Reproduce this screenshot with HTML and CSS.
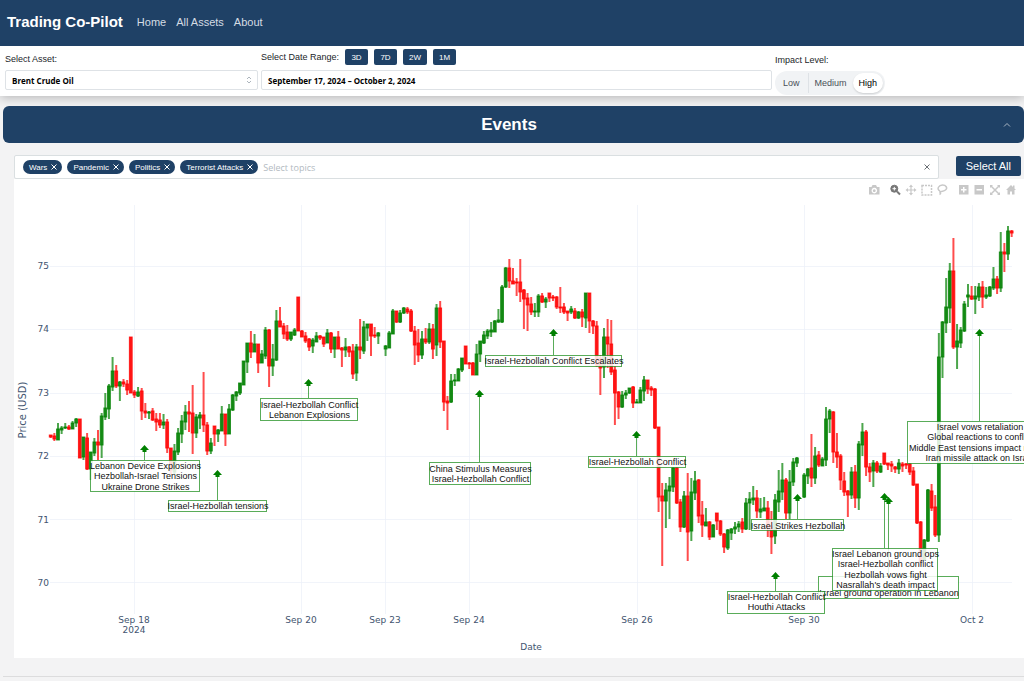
FILE: index.html
```html
<!DOCTYPE html>
<html lang="en">
<head>
<meta charset="utf-8">
<title>Trading Co-Pilot</title>
<link rel="stylesheet" href="styles.css">
</head>
<body>
<header class="topbar">
  <a class="brand" href="#">Trading Co-Pilot</a>
  <nav class="nav">
    <a href="#">Home</a>
    <a href="#">All Assets</a>
    <a href="#">About</a>
  </nav>
</header>

<section class="filters">
  <div class="field">
    <label class="field-label" for="asset">Select Asset:</label>
    <div class="select-wrap">
      <select id="asset" class="control"><option>Brent Crude Oil</option></select>
      <svg class="select-icon" viewBox="0 0 6 8" aria-hidden="true"><path d="M1 3l2-2 2 2M1 5l2 2 2-2"/></svg>
    </div>
  </div>
  <div class="field">
    <div class="range-head">
      <span class="field-label" id="range-label">Select Date Range:</span>
      <button class="preset" type="button">3D</button>
      <button class="preset" type="button">7D</button>
      <button class="preset" type="button">2W</button>
      <button class="preset" type="button">1M</button>
    </div>
    <button class="control" type="button" aria-describedby="range-label">September 17, 2024 – October 2, 2024</button>
  </div>
  <div class="field">
    <span class="field-label" id="impact-label">Impact Level:</span>
    <div class="segmented" role="radiogroup" aria-labelledby="impact-label">
      <input type="radio" name="impact" id="low"><label for="low">Low</label>
      <input type="radio" name="impact" id="medium"><label class="divided" for="medium">Medium</label>
      <input type="radio" name="impact" id="high" checked><label for="high">High</label>
    </div>
  </div>
</section>

<main class="content">
  <button class="accordion" type="button" aria-expanded="true">
    <span class="accordion-title">Events</span>
    <svg class="chevron" viewBox="0 0 8 6" aria-hidden="true"><path d="M1 4.500l3-3 3 3"/></svg>
  </button>

  <div class="panel">
    <div class="topic-row">
      <div class="topics">
        <span class="tag">Wars<button type="button" aria-label="Remove Wars"><svg viewBox="0 0 6 6"><path d="M.5.5l5 5M5.500.5l-5 5"/></svg></button></span>
        <span class="tag">Pandemic<button type="button" aria-label="Remove Pandemic"><svg viewBox="0 0 6 6"><path d="M.5.5l5 5M5.500.5l-5 5"/></svg></button></span>
        <span class="tag">Politics<button type="button" aria-label="Remove Politics"><svg viewBox="0 0 6 6"><path d="M.5.5l5 5M5.500.5l-5 5"/></svg></button></span>
        <span class="tag">Terrorist Attacks<button type="button" aria-label="Remove Terrorist Attacks"><svg viewBox="0 0 6 6"><path d="M.5.5l5 5M5.500.5l-5 5"/></svg></button></span>
        <input class="topic-input" type="text" placeholder="Select topics" aria-label="Select topics">
        <button class="clear" type="button" aria-label="Clear topics"><svg viewBox="0 0 6 6"><path d="M.5.5l5 5M5.500.5l-5 5"/></svg></button>
      </div>
      <button class="select-all" type="button">Select All</button>
    </div>

    <div class="chart-card">
      <svg class="chart" id="chart" viewBox="14 179 1010 479" role="img" aria-label="Brent Crude Oil price with events">
        <g class="modebar">
          <path fill-rule="evenodd" d="M869 187h2.500l1-2h3.500l1 2h2.500v7.500h-10.500zM874.300 187.800a2.800 2.800 0 1 0 .1 0zM874.300 189.300a1.400 1.400 0 1 1-.1 0z"/>
          <g class="active"><circle cx="894.300" cy="188.700" r="3.500"/><path class="glass" d="M892.500 188.700h3.600M894.300 186.900v3.600"/><path class="stroke heavy" d="M897 191.500l3 3"/></g>
          <path d="M911 184.500l2 2.500h-1.400v2.400h2.400v-1.400l2.500 2-2.500 2v-1.400h-2.400v2.400h1.400l-2 2.500-2-2.500h1.400v-2.400h-2.400v1.400l-2.500-2 2.500-2v1.400h2.400v-2.400h-1.400z"/>
          <rect class="stroke dashed" x="922" y="185.500" width="9.500" height="9.500"/>
          <path class="stroke" d="M940 191c-4-2-1-6 2.500-6s5.500 3 3 5-5 1-5.500 2 2 1-.5 2.500"/>
          <path fill-rule="evenodd" d="M959 185h9.500v9.500H959zM961 189v1.500h2v2h1.500v-2h2V189h-2v-2H963v2z"/>
          <path fill-rule="evenodd" d="M974.500 185h9.500v9.500h-9.500zM976.500 189v1.500h5.500V189z"/>
          <path class="stroke" d="M991 186l8 8M999 186l-8 8"/><path d="M990 185h3l-3 3zM1000 185h-3l3 3zM990 195h3l-3-3zM1000 195h-3l3-3z"/>
          <path d="M1006 190l5-5 2 2v-1.500h1.500v3L1016 190h-1.500v4.500h-2.500v-3h-2v3h-2.500V190z"/>
        </g>
        <g class="grid">
          <path d="M50 266.500H1012M50 329.500H1012M50 393.500H1012M50 456.500H1012M50 519.500H1012M50 582.500H1012"/>
          <path d="M134.500 205V614M301.500 205V614M385.500 205V614M469.500 205V614M637.500 205V614M804.500 205V614M972.500 205V614"/>
        </g>
        <g class="tick tick-y">
          <text x="49" y="269">75</text><text x="49" y="332">74</text><text x="49" y="396">73</text>
          <text x="49" y="459">72</text><text x="49" y="523">71</text><text x="49" y="586">70</text>
        </g>
        <g class="tick">
          <text x="134" y="623">Sep 18</text><text x="134" y="633">2024</text>
          <text x="301" y="623">Sep 20</text><text x="385" y="623">Sep 23</text><text x="469" y="623">Sep 24</text>
          <text x="637" y="623">Sep 26</text><text x="804" y="623">Sep 30</text><text x="972" y="623">Oct 2</text>
          <text x="531" y="650">Date</text>
          <text class="axis-title" transform="translate(26 410) rotate(-90)">Price (USD)</text>
        </g>
        <g id="candles"></g>
        <g id="events"></g>
      </svg>
    </div>
  </div>
  <hr class="rule">
</main>
<script src="chart.js"></script>
</body>
</html>
```
FILE: styles.css
```css
* { box-sizing: border-box; }
body {
  margin: 0;
  background: #f3f3f4;
  color: #212529;
  font-family: "Liberation Sans", Arial, sans-serif;
  font-size: 9px;
  overflow-x: hidden;
}
button, input, select { font: inherit; color: inherit; margin: 0; }
button { border: 0; padding: 0; cursor: pointer; }

.topbar {
  position: relative;
  z-index: 1;
  display: flex;
  align-items: center;
  gap: 14px;
  padding: 12px 7px 14px;
  background: #1f4166;
  line-height: 20px;
}
.topbar a { color: #fff; text-decoration: none; }
.brand { font-size: 15px; font-weight: 700; }
.nav { display: flex; gap: 10px; font-size: 11px; }
.topbar .nav a { color: #d5dce4; }

.filters {
  display: grid;
  grid-template-columns: 253fr 511fr 244fr;
  gap: 3px;
  align-items: end;
  padding: 3px 5px 6px;
  background: #fff;
  box-shadow: 0 2px 10px rgba(0, 0, 0, .25);
}
.field { display: flex; flex-direction: column; align-items: stretch; }
.field-label { line-height: 12px; }
.field > .field-label { padding-bottom: 5px; }
.range-head { display: flex; align-items: center; gap: 6px; padding-bottom: 5px; }
.preset {
  height: 16px;
  min-width: 23px;
  padding: 0 6px;
  border-radius: 2px;
  background: #1f4166;
  color: #fff;
  font-size: 8px;
}
.control {
  width: 100%;
  height: 20px;
  padding: 0 6px;
  border: 1px solid #dee2e6;
  border-radius: 2px;
  background: #fff;
  color: #000;
  font-family: "Open Sans", sans-serif;
  font-size: 8px;
  font-weight: 700;
  text-align: left;
  appearance: none;
}
.select-wrap { display: grid; align-items: center; }
.select-wrap > * { grid-area: 1 / 1; }
.select-icon {
  justify-self: end;
  width: 6px;
  height: 8px;
  margin-right: 6px;
  fill: none;
  stroke: #adb5bd;
  pointer-events: none;
}
.segmented {
  display: flex;
  align-self: flex-start;
  height: 24px;
  margin-bottom: -5px;
  padding: 2px;
  border-radius: 12px;
  background: #f1f3f5;
  color: #495057;
}
.segmented input { position: absolute; opacity: 0; }
.segmented label { padding: 0 6px; line-height: 20px; }
.segmented label:first-of-type { padding-right: 8px; }
.segmented .divided { border-left: 1px solid #dee2e6; padding: 0 6px; }
.segmented input:checked + label {
  border-radius: 10px;
  background: #fff;
  color: #000;
  box-shadow: 0 1px 2px rgba(0, 0, 0, .15);
}

.content { padding: 10px 0 4px 3px; }
.accordion {
  display: flex;
  align-items: center;
  width: 100%;
  height: 37px;
  padding: 0 13px 0 12px;
  border-radius: 6px;
  background: #1f4166;
  color: #fff;
}
.accordion-title { flex: 1; font-size: 17px; font-weight: 700; }
.chevron { width: 8px; height: 6px; fill: none; stroke: #a9b6c4; }

.panel { padding: 12px 0 18px 11px; }
.topic-row { display: flex; align-items: flex-start; gap: 17px; padding-right: 3px; }
.topics {
  display: flex;
  flex: 1;
  align-items: center;
  gap: 5px;
  height: 24px;
  padding: 0 8px;
  border: 1px solid #dadfe1;
  border-radius: 2px;
  background: #fff;
}
.tag {
  display: flex;
  align-items: center;
  gap: 4px;
  height: 14px;
  padding: 0 5px 0 6px;
  border-radius: 7px;
  background: #1f4166;
  color: #fff;
  font-size: 8px;
  white-space: nowrap;
}
.tag button { display: flex; background: none; }
.tag svg, .clear svg { width: 6px; height: 6px; fill: none; stroke: currentColor; }
.topic-input {
  flex: 1;
  min-width: 40px;
  padding: 0;
  border: 0;
  outline: 0;
  background: none;
  font-family: "Open Sans", sans-serif;
}
.topic-input::placeholder { color: #b3bac1; }
.clear { display: flex; background: none; color: #6b7075; }
.select-all {
  height: 20px;
  margin-top: 1px;
  padding: 0 10px;
  border-radius: 2px;
  background: #1f4166;
  color: #fff;
  font-size: 11px;
}

.chart-card { background: #fff; }
.chart { display: block; width: 100%; height: auto; }
.modebar { fill: #c8c8c8; }
.modebar .active { fill: #777; stroke: #777; }
.modebar .stroke { fill: none; stroke: #c8c8c8; stroke-width: 1.5px; }
.modebar .heavy { stroke: #777; stroke-width: 2px; }
.modebar .glass { stroke: #fff; stroke-width: 1px; }
.modebar .dashed { stroke-dasharray: 2 1; }
.grid { stroke: #ebf0f8; stroke-opacity: .7; fill: none; }
.tick {
  fill: #42546f;
  font-family: "DejaVu Sans", sans-serif;
  font-size: 9px;
  text-anchor: middle;
}
.tick-y { text-anchor: end; }
.axis-title { font-size: 10px; }
.up { fill: #008000; stroke: #008000; }
.down { fill: #f00; stroke: #f00; }
.wick { stroke-width: 2px; stroke-opacity: .7; }
.body { stroke-width: 1px; fill-opacity: .75; stroke-opacity: .8; }
.event-line { stroke: #008000; stroke-opacity: .65; }
.event-head { fill: #008000; }
.event-box { fill: #fff; fill-opacity: .85; stroke: #008000; stroke-opacity: .65; }
.event-text { fill: #111; font-size: 9px; text-anchor: middle; }

.rule { margin: 0; border: 0; border-top: 1px solid #dcdcdd; }
```
FILE: chart.js
```js
// One entry per hour: direction, high, body top, body bottom, low; "-" is a closed session.
const candles = `
r435,435,437,438 r433,436,439,441 g423,429,440,440 g426,428,430,434 g423,427,428,429 r425,427,429,430
g421,423,429,429 g418,419,423,427 r419,419,458,458 g437,437,457,460 r433,438,469,470 g452,452,469,480
g438,442,453,456 r430,442,445,460 g413,416,445,458 g393,408,417,420 g384,386,409,419 g357,371,387,391
r365,371,386,388 g381,382,386,401 r379,382,384,387 r380,384,390,395 r337,337,393,393 r390,392,395,398
g387,392,396,397 r388,391,411,420 r403,411,413,418 g411,412,413,419 r408,411,420,421 r413,419,422,431
r413,420,425,428 g414,422,425,429 r419,422,448,453 r448,448,470,475 g444,451,472,475 g428,433,452,455
g415,421,434,443 g405,412,422,430 r401,412,414,432 r385,413,433,454 g414,417,433,438 g412,415,418,429
r372,415,425,432 r422,425,451,455 g438,443,451,454 r426,426,434,446 g429,430,434,442 g406,414,431,431
r414,414,434,446 g404,409,434,434 g394,395,410,411 g391,392,396,401 g383,383,393,395 g361,361,385,385
g343,343,362,373 r331,343,352,358 g334,344,352,352 r344,344,363,373 g350,354,363,363 g327,330,356,359
r329,330,366,387 g344,359,366,376 g310,321,360,361 r307,321,327,327 r323,326,334,339 r325,332,339,341
g332,332,339,341 g328,330,335,336 r297,297,331,331 r330,331,337,337 r332,336,341,343 r338,339,347,351
g338,340,346,353 g332,336,342,342 r335,336,338,340 r337,337,344,347 g329,333,343,343 r332,333,349,353
g337,337,349,358 r331,337,349,349 r347,348,350,367 g338,347,350,357 r346,347,352,357 r344,351,374,379
g344,347,373,381 r319,347,350,359 g321,327,351,354 g324,324,328,341 r324,324,336,356 r327,335,336,338
g332,333,336,344 - g345,346,349,356 g331,333,348,348 g309,311,334,334 r311,311,322,323 g310,313,322,323
g307,308,313,314 r307,309,312,314 r309,311,331,332 r326,331,345,365 r329,343,355,362 g331,339,355,359
r328,339,342,344 g323,329,342,344 r324,329,349,359 g304,308,345,356 r301,308,342,348 r341,341,402,411
r396,401,403,430 g374,381,402,403 g374,380,381,386 g368,369,381,381 g358,358,370,372 r346,346,364,364
r362,363,364,369 r362,363,375,375 g344,354,375,375 g341,341,354,362 g331,335,343,344 g329,331,336,339
g322,330,332,337 g320,321,332,332 g309,320,322,323 g285,287,322,323 g267,268,287,288 r259,268,281,288
r268,281,284,284 r278,282,283,296 r259,282,292,302 r289,290,299,329 r293,298,305,331 r297,304,312,315
g303,311,312,317 g294,296,312,317 r293,296,302,303 g297,299,302,308 r293,293,298,302 r295,297,298,301
r296,297,307,309 r287,307,308,313 r303,307,312,314 r311,311,313,321 g306,309,312,314 r308,311,318,319
g311,312,318,319 r309,312,317,327 g293,293,318,328 r293,293,321,333 r320,321,326,334 r321,326,365,367
r355,358,368,395 g328,337,367,378 r319,337,344,368 r320,344,372,375 r366,370,393,425 r391,392,407,419
g391,395,407,408 g390,393,395,399 g388,388,393,394 r386,387,403,408 g399,402,403,403 g387,390,403,403
g376,380,391,401 r380,380,389,394 r386,388,390,396 r388,389,428,429 r427,427,497,512 r483,496,501,566
g483,490,501,528 g477,486,491,519 g467,468,487,492 r467,468,503,504 r499,502,527,532 g491,496,527,528
r473,496,532,561 g478,492,531,541 g471,481,493,500 r479,480,516,523 r501,515,525,537 g508,522,526,526
r521,522,537,540 g524,525,537,537 r513,513,521,530 r520,521,534,536 r533,534,547,553 g529,530,548,550
g528,529,533,540 g522,527,529,534 g521,524,527,532 r518,522,529,533 g498,503,529,530 g492,499,503,530
g486,498,500,505 r490,498,511,518 g498,509,512,518 g497,508,511,511 r501,508,527,537 r511,526,537,554
g494,500,536,544 g470,491,502,512 g463,480,492,500 r478,480,513,519 g470,482,513,519 g458,462,482,486
g457,458,463,467 - g473,475,497,498 g468,469,476,484 r434,468,478,487 g447,456,478,484 r451,455,465,467
g457,459,466,466 g407,419,460,466 g409,411,419,433 r411,412,452,463 r433,452,457,468 r454,456,480,490
r472,481,492,496 r490,491,495,517 g467,472,495,499 r465,472,498,508 g441,444,498,510 g423,432,445,456
r430,432,467,476 r463,467,472,482 g460,463,471,487 r461,463,471,473 g463,466,472,473 r453,453,464,465
r463,463,465,470 r461,464,466,472 r466,467,469,473 g459,463,469,474 r462,464,466,472 r463,464,465,469
r463,464,472,475 r467,471,485,486 r484,484,523,524 r521,522,562,566 g539,540,560,560 g489,490,541,542
r484,491,508,511 r495,507,535,537 g333,357,535,542 g321,322,357,378 g278,307,323,333 g263,271,308,323
r238,271,347,349 g324,341,347,369 g327,330,343,348 g301,304,331,332 g284,295,297,307 r286,296,299,300
g286,296,299,314 g283,287,297,301 r281,287,297,308 g287,295,297,299 g286,287,296,297 g267,279,288,290
r276,279,288,294 g232,252,288,292 r243,252,254,272 g226,231,254,260 r230,231,233,237`.trim().split(/\s+/);

// x and tip: arrow head position; box: left, top, width, height; first: baseline of the first line.
const events = [
  { x: 144, tip: 446, box: [90, 460, 109, 32], first: 469, lines: ["Lebanon Device Explosions", "Hezbollah-Israel Tensions", "Ukraine Drone Strikes"] },
  { x: 217, tip: 471, box: [168, 500, 98, 12], first: 509, lines: ["Israel-Hezbollah tensions"] },
  { x: 308, tip: 380, box: [260, 398, 97, 23], first: 408, lines: ["Israel-Hezbollah Conflict", "Lebanon Explosions"] },
  { x: 479, tip: 391, box: [429, 462, 101, 23], first: 472, lines: ["China Stimulus Measures", "Israel-Hezbollah Conflict"] },
  { x: 553, tip: 330, box: [485, 355, 136, 12], first: 364, lines: ["Israel-Hezbollah Conflict Escalates"] },
  { x: 636, tip: 432, box: [588, 456, 97, 12], first: 465, lines: ["Israel-Hezbollah Conflict"] },
  { x: 797, tip: 495, box: [751, 519, 92, 12], first: 529, lines: ["Israel Strikes Hezbollah"] },
  { x: 888, tip: 498, box: [818, 576, 140, 23], first: 586, lines: ["", "Israel ground operation in Lebanon"] },
  { x: 775, tip: 573, box: [727, 591, 97, 23], first: 600, lines: ["Israel-Hezbollah Conflict", "Houthi Attacks"] },
  { x: 884, tip: 494, box: [832, 548, 105, 43], first: 557, lines: ["Israel Lebanon ground ops", "Israel-Hezbollah conflict", "Hezbollah vows fight", "Nasrallah's death impact"] },
  { x: 979, tip: 330, box: [907, 421, 144, 43], first: 430, lines: ["Israel vows retaliation", "Global reactions to conflict", "Middle East tensions impact market", "Iran missile attack on Israel"] }
];

const svgNs = "http://www.w3.org/2000/svg";
function add(parent, name, attrs, text) {
  const node = document.createElementNS(svgNs, name);
  for (const key in attrs) node.setAttribute(key, attrs[key]);
  if (text) node.textContent = text;
  parent.appendChild(node);
  return node;
}

const firstX = 50.7;
const stepX = 3.64;
const candleLayer = document.getElementById("candles");
candles.forEach((entry, i) => {
  if (entry === "-") return;
  const [high, top, bottom, low] = entry.slice(1).split(",").map(Number);
  const x = firstX + i * stepX;
  const group = add(candleLayer, "g", { class: entry[0] === "g" ? "up" : "down" });
  add(group, "path", { class: "wick", d: `M${x} ${high}V${low}` });
  add(group, "rect", { class: "body", x: x - 1.4, y: top, width: 2.8, height: Math.max(1, bottom - top) });
});

const eventLayer = document.getElementById("events");
for (const { x, tip, box, first, lines } of events) {
  const [left, top, width, height] = box;
  add(eventLayer, "path", { class: "event-line", d: `M${x + 0.5} ${tip + 4}V${top}` });
  add(eventLayer, "path", { class: "event-head", d: `M${x + 0.5} ${tip - 1}l4.500 5h-2.500v2h-4v-2h-2.500z` });
  add(eventLayer, "rect", { class: "event-box", x: left + 0.5, y: top + 0.5, width, height: height - 1 });
  lines.forEach((line, n) => {
    add(eventLayer, "text", { class: "event-text", x: left + 1 + width / 2, y: first + n * 10.3 }, line);
  });
}
```
